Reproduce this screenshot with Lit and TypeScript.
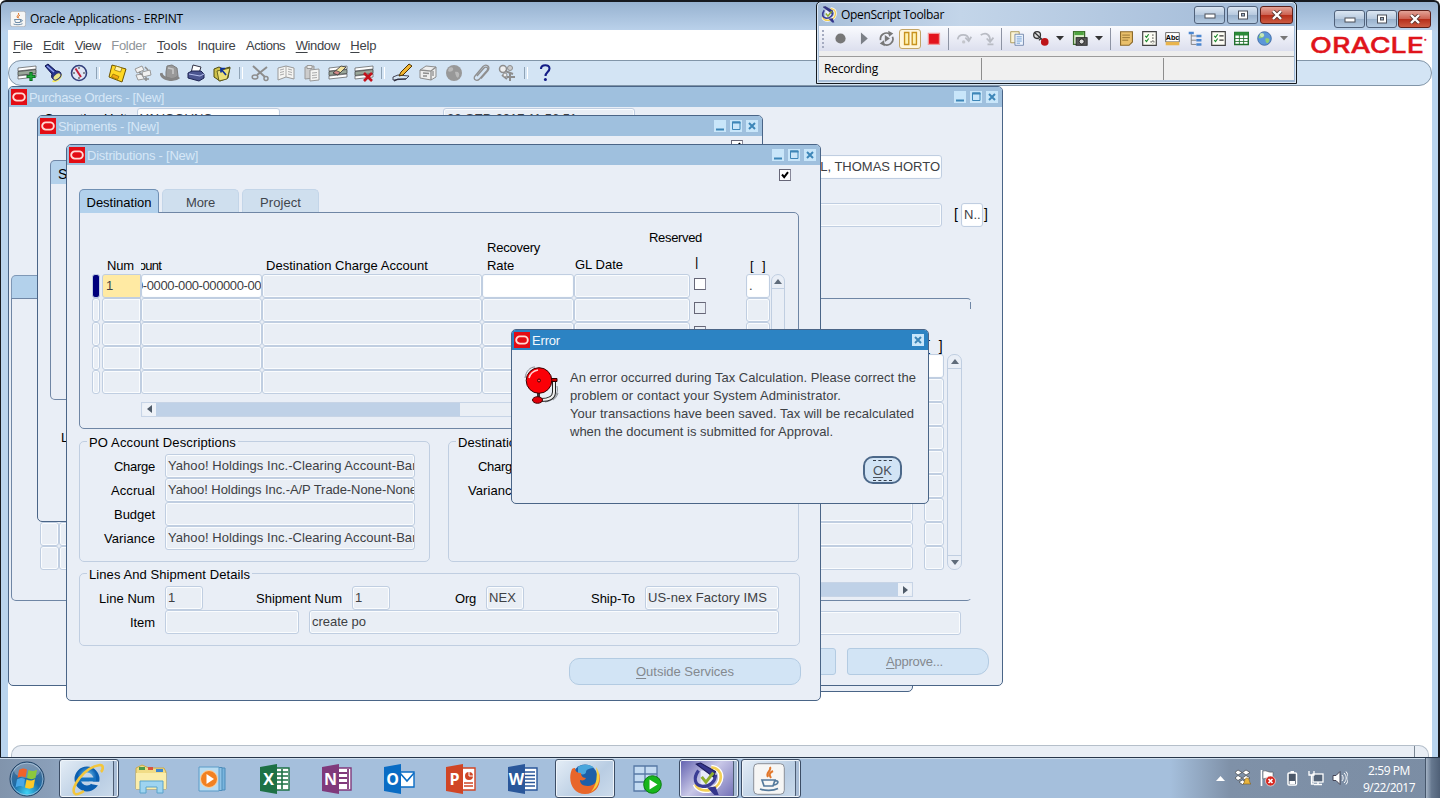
import { LitElement, html, svg, css, nothing } from "lit";
import { customElement, property } from "lit/decorators.js";

/** Text run spaced so that it fills a given width. */
@customElement("fit-text")
class FitText extends LitElement {
  @property({ type: Number }) w = 0;
  static styles = css`
    :host { display: inline-block; width: max-content; white-space: nowrap; flex: none; }
  `;
  render() { return html`<slot></slot>`; }
  firstUpdated() {
    if (!this.w) return;
    const len = (this.textContent || "").length;
    const natural = this.getBoundingClientRect().width;
    this.style.letterSpacing = `${(this.w - natural) / len}px`;
  }
}

/** Inner window of the Forms desktop. */
@customElement("mdi-window")
class MdiWindow extends LitElement {
  @property() heading = "";
  @property({ type: Number }) w = 0;
  @property({ type: Boolean }) modal = false;
  static styles = css`
    :host { display: flex; flex-direction: column; box-sizing: border-box; background: #e9eef6;
      border: 1px solid #4a6587; border-radius: 5px; overflow: hidden; }
    .bar { display: flex; align-items: center; height: 20px; flex: none; background: #9fc0de; color: #d6e7f7;
      padding: 0 4px 0 2px; }
    .bar.modal { background: #2c83c3; color: #f2f8fd; }
    .logo { margin-right: 2px; display: block; }
    fit-text { padding-top: 2px; }
    .gap { flex: 1; }
    .ctl { display: flex; gap: 4px; }
    svg { display: block; }
  `;
  render() {
    const box = svg`<rect width="12" height="12" fill="#c9e6fa"/>`;
    return html`
      <div class="bar ${this.modal ? "modal" : ""}">
        <svg class="logo" width="16" height="16" viewBox="0 0 16 16"><rect width="16" height="16" fill="#e30c14"/>
          <rect x="2.200" y="4.400" width="11.600" height="7.200" rx="3.600" fill="none" stroke="#ffd9d4" stroke-width="1.900"/></svg>
        <fit-text .w=${this.w}>${this.heading}</fit-text>
        <span class="gap"></span>
        <span class="ctl">
          ${this.modal ? nothing : html`
            <svg width="12" height="12">${box}<path d="M2 9.500h8" stroke="#3d86b8" stroke-width="2"/></svg>
            <svg width="12" height="12">${box}<path d="M2.500 2v7.500h7.500V2z" fill="none" stroke="#3d86b8"/><path d="M2 2.500h8.500" stroke="#3d86b8" stroke-width="2"/></svg>`}
          <svg width="12" height="12">${box}<path d="M3 3l6 6M9 3l-6 6" stroke="#3d86b8" stroke-width="2"/></svg>
        </span>
      </div>
      <slot></slot>`;
  }
}

const t = (s: string, w: number, cls = "") => html`<fit-text class=${cls} .w=${w}>${s}</fit-text>`;

// Label with an underlined mnemonic at index i
const m = (s: string, i: number, w: number, cls = "") =>
  html`<fit-text class=${cls} .w=${w}>${s.slice(0, i)}<u>${s[i]}</u>${s.slice(i + 1)}</fit-text>`;

const brackets = "[\u00a0\u00a0]";

const ico = (body: unknown, size = 20) =>
  html`<svg width=${size} height=${size} viewBox="0 0 20 20">${body}</svg>`;

const stripes = svg`<path d="M1 5l18-2v3L1 8z" fill="#fff" stroke="#555" stroke-width=".7"/><path d="M1 8.500l18-2v4L1 12.500z" fill="#9aa79a" stroke="#444" stroke-width=".8"/><path d="M1 13l18-2v3L1 16z" fill="#fff" stroke="#555" stroke-width=".7"/>`;
const sheets = svg`<path d="M2 5l8-2 8 2v11l-8-2-8 3z" fill="#f4f4f2" stroke="#999"/><path d="M10 3v11M4 7l4-1M4 9.500l4-1M4 12l4-1M12 6l4 1M12 8.500l4 1M12 11l4 1" stroke="#aaa" fill="none"/>`;

const mainTools: unknown[][] = [
  [
    svg`${stripes}<path d="M14 9v9M9.500 13.500h9" stroke="#0a6b1d" stroke-width="3.200"/><path d="M14 10v7M10.500 13.500h7" stroke="#1fae3c" stroke-width="1.400"/>`,
    svg`<path d="M9 19c5 1 10-3 10-8l-5 0z" fill="#f7ec5a"/><path d="M2 3l3-2 8 7c3 0 5 1 5 3 0 3-4 6-7 5-2 0-3-2-2-5z" fill="#27348f" stroke="#0d1450"/><path d="M4 3l7 6" stroke="#8fa2ee" stroke-width="1.500"/><ellipse cx="14" cy="13.500" rx="4.500" ry="2.600" transform="rotate(-38 14 13.500)" fill="#e8e48a" stroke="#333a70"/>`,
    svg`<circle cx="10" cy="10" r="7.500" fill="#dfe6f4" stroke="#33407c" stroke-width="1.600"/><path d="M6.500 5.500L12 14" stroke="#c3203a" stroke-width="2"/><path d="M10 4v2M10 14v2M4 10h2M14 10h2" stroke="#333"/>`,
  ],
  [
    svg`<path d="M5 2l14 4-4 13-13-5z" fill="#ffd824" stroke="#6e5500"/><path d="M9 3l6 2-1.500 4-6-2z" fill="#fff3b0" stroke="#8a6d00" stroke-width=".7"/><path d="M6 11l6 2.500-1.500 3-6-2.500z" fill="#f3a712" stroke="#8a6d00" stroke-width=".7"/>`,
    svg`<path d="M2 6l7-3 2 4-7 3zM9 9l8-2 1 5-8 2zM3 12l6-1 2 5-6 1z" fill="#f1f1f1" stroke="#999"/><path d="M12 4l3 3M6 9l3 3M13 14v4M11 16h5" stroke="#8d8d8d" stroke-width="1.500"/>`,
    svg`<path d="M6 9l1-6 5-1 5 3 1 8-5 3-7-2z" fill="#999" stroke="#7d7d7d"/><path d="M1 10c1 6 12 9 18 4" stroke="#858585" stroke-width="3" fill="none"/><path d="M8 5l5 1v5" stroke="#c9c9c9" stroke-width="1.500" fill="none"/>`,
    svg`<path d="M7 2l8 2-2 6H5z" fill="#fff" stroke="#334"/><path d="M2 10l4-2h9l3 3v4l-5 3-11-3z" fill="#4b5590" stroke="#1c2352"/><path d="M3 11l11 2 4-2" stroke="#b6c0ee" fill="none"/>`,
    svg`<path d="M2 6l5-2 4 2 7-2-2 11-8 3-6-4z" fill="#cfc24a" stroke="#4d4a10"/><path d="M5 8l13-3-3 11-8 2z" fill="#eadf78" stroke="#4d4a10" stroke-width=".8"/><path d="M14 12L9 6m0 3.500V5.500h4" stroke="#0b2f9c" stroke-width="1.700" fill="none"/>`,
  ],
  [
    svg`<path d="M3 3l12 11M17 4L7 12" stroke="#8d8d8d" stroke-width="2"/><circle cx="16" cy="15.500" r="2" fill="none" stroke="#8d8d8d" stroke-width="1.500"/><ellipse cx="5" cy="14" rx="2.800" ry="2" fill="none" stroke="#8d8d8d" stroke-width="1.500"/>`,
    sheets,
    svg`<path d="M3 4l9-1v12l-9 1z" fill="#ccc" stroke="#999"/><path d="M5 2.500h5v3H5z" fill="#eee" stroke="#999"/><path d="M8 7l9-1v11l-9 1z" fill="#f4f4f2" stroke="#999"/><path d="M10 10l5-.5M10 12.500l5-.5M10 15l5-.5" stroke="#aaa"/>`,
    svg`${stripes}<path d="M5 10L13 3l5 1-8 8z" fill="#f3e3a0" stroke="#444" stroke-width=".9"/><path d="M5 10l3-2.500 4 1.800L10 12z" fill="#d68a8a" stroke="#444" stroke-width=".8"/>`,
    svg`${stripes}<path d="M10 10l8 8M18 10l-8 8" stroke="#c4121c" stroke-width="2.600"/>`,
  ],
  [
    svg`<path d="M1 14l5-2 11 1-3 3-13 1z" fill="#d6e6f4" stroke="#334" stroke-width=".9"/><path d="M2 18l4-2h8" stroke="#223" fill="none" stroke-width="1.200"/><path d="M7 13l2-4 8-8 3 2-9 9z" fill="#f2b632" stroke="#503300"/>`,
    svg`<path d="M2 7l6-4 10 1v10l-5 3-11-2z" fill="#eee" stroke="#8d8d8d"/><path d="M2 7l11 1v9M13 8l5-4M5 10l6 .5M5 13h4M15 8v5" stroke="#8d8d8d" fill="none" stroke-width="1.300"/>`,
    svg`<circle cx="10" cy="10" r="8" fill="#989898"/><path d="M5 5c3-2 5 0 4 2s-4 2-5 1zM11 9c3-1 5 1 4 4s-3 2-4-4z" fill="#b9b9b9"/>`,
    svg`<path d="M6 13l7-8c2-2 5 0 3 2.500L8.500 16c-3 3-7 0-4.500-3l8-9.500c3-3 8 0 5 4l-7 8" fill="none" stroke="#8f8f8f" stroke-width="1.300"/>`,
    svg`<circle cx="6" cy="6" r="3.500" fill="#eee" stroke="#8d8d8d" stroke-width="1.500"/><circle cx="13" cy="5" r="2.500" fill="#ccc" stroke="#8d8d8d"/><path d="M8 8l8 3M5 12l5 4M13 10v8M10 14h8" stroke="#8d8d8d" stroke-width="2"/><circle cx="8" cy="12" r="2" fill="#eee" stroke="#8d8d8d"/>`,
  ],
  [svg`<path d="M6 6c0-5 8.500-5 8.500-.5 0 3.500-4 3.500-4 7.500" fill="none" stroke="#131c86" stroke-width="2.100"/><circle cx="10.400" cy="16.500" r="1.500" fill="#131c86"/>`],
];

const check = svg`<path d="M5 7l1.500 1.500L9 5M5 12l1.500 1.500L9 10" stroke="#1d8a2e" stroke-width="1.400" fill="none"/>`;
const drop = (c = "#333") => html`<svg class="drop" width="8" height="5"><path d="M0 0h8L4 4.500z" fill=${c} /></svg>`;
const opDoc = svg`<path d="M2 2h10v13H2z" fill="#fbf3d5" stroke="#a5904a"/><path d="M7 5h10v13H7z" fill="#eef5ff" stroke="#6a7fa5"/><path d="M9 8h6M9 10.500h6M9 13h6M9 15.500h4" stroke="#5b8fc9"/>`;

const officeIcon = (letter: string, c: string, page: unknown) => html`
  <svg width="32" height="32" viewBox="0 0 32 32">${page}
    <path d="M1 4l17-3v30L1 28z" fill=${c} />
    <text x="9.500" y="21.500" text-anchor="middle" class="office">${letter}</text>
  </svg>`;
const page = (c: string, lines: unknown) => svg`<path d="M17 5h13v22H17z" fill="#fff" stroke=${c} stroke-width="1.400"/>${lines}`;

const java = (s: number) => html`<svg width=${s} height=${s} viewBox="0 0 32 32">
  <rect x=".7" y=".7" width="30.600" height="30.600" rx="4" fill="#f6f6f5" stroke="#8a8f98" />
  <path d="M17 4c2 4-5 5-2 10M20 8c-4 2-4 4-2 7" fill="none" stroke="#e2772a" stroke-width="2"/>
  <path d="M9 17h13l-2 6h-9zM22 18c4-1 4 3-1 4" fill="none" stroke="#557a9c" stroke-width="1.700"/><path d="M7 26c5 2 13 2 18-.5" stroke="#557a9c" fill="none" stroke-width="1.700"/></svg>`;

const script = (s: number) => html`<svg width=${s} height=${s} viewBox="0 0 32 32">
  <path d="M20 5c12 1 12 16 0 21-7 2-13 0-15-5" fill="none" stroke="#fff" stroke-width="5"/>
  <path d="M20 5c12 1 12 16 0 21-7 2-13 0-15-5" fill="none" stroke="#f3cf55" stroke-width="2.600"/>
  <path d="M10 8h12v14H10z" fill="#e8ebfa"/>
  <path d="M8 8c-5 7-4 14 4 15 7 0 12-5 12-11" fill="none" stroke="#3a3c95" stroke-width="3"/>
  <path d="M6 2l4-1 14 8-2 5z" fill="#34358c" stroke="#1d1c5c"/>
  <path d="M11 14l4 5 7-9" fill="none" stroke="#8fae2d" stroke-width="2.800"/><path d="M16 24l7 7h4l-3-8z" fill="#34358c"/></svg>`;

const tasks: { cls?: string; icon: unknown }[] = [
  { cls: "on stack", icon: html`<svg width="34" height="34" viewBox="0 0 34 34">
      <defs><radialGradient id="ie" cx=".5" cy=".35"><stop offset="0" stop-color="#7fd3fa"/><stop offset="1" stop-color="#0b5eb0"/></radialGradient></defs>
      <circle cx="17" cy="17" r="9.500" fill="none" stroke="url(#ie)" stroke-width="6"/><path d="M8 17.500h18" stroke="#1672c0" stroke-width="4"/><path d="M19 19.800h11v4l-8-1.500z" fill="#cfdae9"/>
      <path d="M5 32C-1 27 14 5 30 3c4 0 3 5 1 7M5 32c3 1 6-1 9-3" fill="none" stroke="#f3c63c" stroke-width="2.600"/></svg>` },
  { icon: html`<svg width="34" height="32" viewBox="0 0 34 32"><path d="M2 5l6-3 7 3h15l2 4v17H2z" fill="#f1dc86" stroke="#c9a94d"/><path d="M5 4h6v3H5z" fill="#4b9a4a"/><path d="M14 4h5v3h-5z" fill="#d8523e"/><path d="M22 6h7v3h-7z" fill="#3f86cf"/><path d="M2 10h30v16H2z" fill="#fbedaa"/><path d="M6 18h23v12h-6v-6H12v6H6z" fill="#9ed4f0" stroke="#5aa3cb"/></svg>` },
  { icon: html`<svg width="30" height="28" viewBox="0 0 30 28"><path d="M9 3h18v22H9z" fill="#79b4dd" stroke="#4d8dbb"/><path d="M5 2.500h19v23H5z" fill="#8fc3e6" stroke="#4d8dbb"/><path d="M1 2h20v24H1z" fill="#b9dcf1" stroke="#5b9bc8"/><circle cx="11" cy="14" r="8.500" fill="#f28121" stroke="#fbd3a3"/><path d="M8.500 9l7.500 5-7.500 5z" fill="#fff"/></svg>` },
  { icon: officeIcon("X", "#1e7145", page("#1e7145", svg`<path d="M18 9h11M18 13h11M18 17h11M18 21h11M23 6v20" stroke="#1e7145" stroke-width="1.600"/>`)) },
  { icon: officeIcon("N", "#80397b", page("#80397b", svg`<path d="M18 10h8M18 15h8M18 20h8M27 6v20" stroke="#80397b" stroke-width="1.800"/>`)) },
  { icon: officeIcon("O", "#0a6cc4", svg`<path d="M17 9h14v15H17z" fill="#fff" stroke="#0a6cc4" stroke-width="1.400"/><path d="M17 10l7 8 7-8" fill="none" stroke="#0a6cc4" stroke-width="1.600"/>`) },
  { icon: officeIcon("P", "#d04525", page("#d04525", svg`<circle cx="24" cy="13" r="4" fill="#d04525"/><path d="M24 13V9M24 13h4" stroke="#fff"/><path d="M19 20h9M19 23h9" stroke="#d04525" stroke-width="1.500"/>`)) },
  { icon: officeIcon("W", "#2a579a", page("#2a579a", svg`<path d="M18 9h10M18 12.500h10M18 16h10M18 19.500h10M18 23h10" stroke="#2a579a" stroke-width="1.500"/>`)) },
  { cls: "on", icon: html`<svg width="32" height="32" viewBox="0 0 32 32"><circle cx="16" cy="14" r="12.500" fill="#1d5fa8"/><path d="M9 4c4-3 13-3 16 1-3 0-8 1-8 4 0 3-5 3-8 1z" fill="#49a6dc"/><path d="M3 6C-2 18 4 31 16 31c12 0 17-11 14-21 0 8-5 13-11 13-6 0-8-3-8-6 3 1 5 0 6-2-4 0-5-3-5-5-4 0-6-2-6-5-1 0-2 0-3 1z" fill="#e8662a"/><path d="M27 4c6 8 4 20-5 25 5-6 7-15 5-25z" fill="#f9cf3d"/></svg>` },
  { icon: html`<svg width="30" height="30" viewBox="0 0 30 30"><path d="M2 2h23v25H2z" fill="#c4dbf2" stroke="#5779a5" stroke-width="1.300"/><path d="M2 10h23M2 18h23M13 2v25" stroke="#5779a5" stroke-width="1.300"/><circle cx="20.500" cy="20.500" r="8.800" fill="#17b61c" stroke="#0a7c10"/><path d="M17.500 15.500l8 5-8 5z" fill="#fff"/></svg>` },
  { cls: "on stack violet", icon: script(34) },
  { cls: "on stack", icon: java(32) },
];

@customElement("app-root")
class AppRoot extends LitElement {
  static styles = css`
    :host { display: flex; flex-direction: column; position: relative; width: 1440px; height: 798px; overflow: hidden;
      background: #fff; font: 13px/16px "Liberation Sans", Arial, sans-serif; color: #000; }
    * { box-sizing: border-box; }
    svg { display: block; flex: none; }
    u { text-underline-offset: 2px; text-decoration-thickness: 1px; }
    .segoe { font-family: "Open Sans", "Noto Sans", sans-serif; font-size: 12px; }

    .frame { display: flex; flex-direction: column; height: 757px; border: solid #16191f; border-width: 2px 2px 0 1px; border-radius: 6px 6px 0 0;
      background: linear-gradient(#97b2d0, #bcd3ec 30px, #b9d4ee 31px); padding: 0 6px 0 7px; }
    .caption { display: flex; align-items: center; height: 28px; padding: 5px 0 0 2px; gap: 4px; flex: none; }
    .grow { flex: 1; }
    .wctl { display: flex; align-self: flex-start; gap: 1px; }
    .wb { display: grid; place-items: center; width: 31px; height: 18px; border: 1px solid #50617a; border-radius: 3px;
      background: linear-gradient(#dbe6f2, #b8cadf 48%, #98b0cb 50%, #b5cbe2); }
    .wb.x { width: 33px; background: linear-gradient(#e3a397, #cd6353 48%, #b52c18 50%, #cc5b42); border-color: #5d1f19; }
    .main .wctl { margin: 3px 1px 0 0; }
    .menu { display: flex; align-items: center; height: 30px; background: #fff; padding: 2px 0 0 5px; gap: 10.600px; color: #3e4247; flex: none; }
    .off { color: #8f9499; }
    .brand { margin-top: -3px; }
    .brand text { font: 500 22px "Inter", sans-serif; fill: #e0141b; stroke: #e0141b; stroke-width: .4px; }
    .brand .tm { font-size: 5px; }
    .desktop { flex: 1; background: #fff; display: flex; flex-direction: column; }
    .tools { display: flex; align-items: center; height: 26px; border: 1px solid #8195a8; border-radius: 14px; background: #d3e4f4; padding-left: 5px; flex: none; }
    .tools .i { width: 26.100px; display: grid; place-items: center; }
    .tools .s { width: 12px; height: 13px; display: grid; place-items: center; }
    .tools .s::before { content: ""; width: 2px; height: 12px; border-left: 1px solid #8fa3b6; border-right: 1px solid #fff; }
    .status { height: 12px; margin: auto 3px 0; border: 1px solid #b5bfca; border-bottom: 0; border-radius: 10px 10px 0 0; background: #e9eef5;
      display: flex; justify-content: flex-end; padding-right: 13px; }
    .status i { width: 1px; background: #7b8794; }

    mdi-window, .openscript { position: absolute; }
    .back { left: 400px; top: 300px; width: 513px; height: 392px; }
    .po { left: 8px; top: 86px; width: 995px; height: 600px; }
    .ship { left: 37px; top: 115px; width: 726px; height: 407px; }
    .dist { left: 66px; top: 144px; width: 755px; height: 557px; }
    .err { left: 511px; top: 329px; width: 418px; height: 175px; }

    .f { height: 24px; border: 1px solid #c0cee1; border-radius: 3px; box-shadow: inset 0 0 0 1px #fafcfe; background: #e9eef5;
      padding: 0 2px; line-height: 22px; color: #3d4044; white-space: nowrap; overflow: hidden; flex: none; }
    .f.w { background: #fff; }
    .f.y { background: #ffeaa3; box-shadow: none; }
    .r { display: flex; flex: none; }
    .cb { width: 12px; height: 12px; border: 1px solid #667; border-right-color: #889; background: #fff; flex: none; display: grid; place-items: center; }
    .cb.d { background: #e9eef5; }
    .btn { display: grid; place-items: center; height: 27px; background: #d2e4f5; border: 1px solid #b3cbe2; color: #84898f; border-radius: 10px; flex: none; }

    .vs { width: 14px; border: 1px solid #c0cee1; border-radius: 7px; display: flex; flex-direction: column; justify-content: space-between; }
    .vs span { height: 14px; display: grid; place-items: center; border-bottom: 1px solid #c0cee1; }
    .vs span + span { border: 0; border-top: 1px solid #c0cee1; }
    .hs { display: flex; height: 15px; border: 1px solid #c7d4e6; background: #e9eef5; }
    .hs span { width: 14px; display: grid; place-items: center; background: #eef2f8; border-radius: 5px 0 0 5px; }
    .hs span.rt { border-radius: 0 5px 5px 0; }
    .hs i { background: #bfd1e7; }

    /* Purchase Orders */
    .po1 { margin: 1px 0 0 35px; }
    .po1 .lab { width: 93px; padding-top: 3px; }
    .po1 .f { line-height: 20px; }
    .po1 .unit { width: 143px; } .po1 .date { width: 192px; margin-left: 163px; padding-left: 3px; }
    .end { justify-content: flex-end; }
    .po2 { margin-top: 23px; padding-right: 60px; }
    .po2 .f, .po3 .wide { width: 360px; text-align: right; padding-right: 1px; }
    .po3 { margin-top: 24px; padding-right: 14px; font-size: 14px; }
    .po3 .lb { width: 6px; margin-left: 12px; padding-top: 3px; }
    .po3 .nn { width: 22px; margin-left: 1px; font-size: 13px; }
    .po3 .rb { width: 4px; margin-left: 1px; padding-top: 3px; }
    .potab { width: 80px; height: 24px; margin: 48px 0 0 2px; border: 1px solid #7f98b6; border-bottom: 0; border-radius: 5px 0 0; background: #b3d1eb; flex: none; }
    .poframe { margin: -1px 0 0 2px; width: 961px; height: 303px; border: 1px solid #6f86a5; border-right-color: transparent; border-radius: 0 5px 5px 5px; padding-left: 28px; flex: none;
      background: linear-gradient(#6f86a5, #6f86a5) no-repeat right 3px / 1px 7px; }
    .poh { height: 55px; display: flex; align-items: flex-end; justify-content: flex-end; padding-right: 28px; font-size: 14px; }
    .pog { display: flex; }
    .pog .rows { width: 904px; }
    .pog .a { width: 19px; } .pog .b { width: 854px; } .pog .c { width: 20px; margin-left: 11px; }
    .pog .vs { margin-left: 3px; width: 15px; }
    .pohs { width: 313px; margin: 12px 0 0 560px; }
    .po5 { margin-top: 10px; padding-right: 41px; } .po5 .f { width: 400px; }
    .po6 { margin-top: 13px; padding-right: 13px; gap: 11px; }
    .po6 .btn { width: 142px; border-radius: 3px 12px 12px 3px; padding-right: 7px; } .po6 .btn:first-child { border-radius: 3px; width: 120px; }

    /* Shipments */
    .shcb { margin: 4px 19px 0 auto; }
    .shtab { width: 100px; height: 24px; margin: 8px 0 0 12px; padding: 5px 0 0 7px; font-size: 14px; border: 1px solid #6f86a5; border-bottom: 0; border-radius: 5px 0 0; background: #b3d1eb; flex: none; }
    .shframe { width: 500px; height: 216px; margin-left: 12px; border: 1px solid #6f86a5; border-top: 0; border-radius: 0 0 5px 5px; flex: none; }
    .shl { margin: 30px 0 0 23px; }

    /* Distributions */
    .dcb { margin: 4px 29px 0 auto; }
    .tabs { display: flex; gap: 3px; margin: 8px 0 0 12px; height: 24px; flex: none; }
    .tab { width: 77px; height: 23px; border-radius: 5px 5px 0 0; border: 1px solid #c3d5e8; border-bottom: 0; background: #cfdfee; color: #3f454c; display: grid; place-items: center; padding-top: 3px; }
    .tab.act { width: 80px; height: 24px; border-color: #6f8fb3; background: #b2d1ec; color: #000; position: relative; }
    .dframe { margin: -1px 0 0 12px; width: 720px; height: 217px; border: 1px solid #6f86a5; border-radius: 0 5px 5px 5px; flex: none; padding-left: 12px; }
    .res { height: 33px; padding: 17px 0 0 557px; }
    .grid { display: grid; grid-template-columns: 10px 39px 121px 220px 92px 116px 56px 24px; width: 678px; }
    .head { height: 28px; grid-template-rows: 29px; align-items: end; line-height: 18px; }
    .head > * { display: flex; flex-direction: column; align-items: flex-start; padding-left: 5px; }
    .head .h0 { padding: 0; } .head .hc { padding-left: 0; overflow: hidden; }
    .head .dca { padding-left: 4px; }
    .head .clip { margin-left: -8px; }
    .head .gl { padding: 0 0 1px 1px; } .head .bar { padding: 0 0 4px 5px; } .head .dff { padding-left: 4px; }
    .grid .f.n { padding-left: 3px; border-radius: 3px 0 0 3px; }
    .grid .ind { width: 8px; padding: 0; border-radius: 3px; }
    .grid .ind.sel { background: #00007c; box-shadow: none; }
    .grid .cb { margin: 4px 0 0 4px; }
    .acct fit-text { margin-left: -8px; }
    .dbody { display: flex; }
    .dbody .vs { margin-left: 1px; height: 120px; }
    .dhs { width: 549px; margin: 7.500px 0 0 49px; } .dhs i { width: 304px; }
    .sets { display: flex; gap: 18px; margin: 12px 0 0 12px; flex: none; }
    .set { border: 1px solid #c0cee1; border-radius: 5px; height: 121px; width: 351px; padding-top: 12px; }
    .set > .leg { position: relative; display: table; height: 14px; line-height: 14px; margin: -18px 0 4px 7px; padding: 0 2px; background: #e9eef6; }
    .lbl { width: 75px; text-align: right; padding-top: 5px; flex: none; }
    .set .f { margin-left: 10px; } .acc .f { width: 250px; }
    .acc2 .lbl { width: 70px; } .acc2 .f { width: 240px; }
    .lines { width: 721px; height: 73px; margin: 11px 0 0 12px; flex: none; }
    .f38 { width: 38px; }
    .l2 { width: 139px; } .l3 { width: 86px; } .l4 { width: 111px; }
    .lines .f133 { width: 134px; } .lines .item { width: 134px; } .lines .desc { width: 470px; }
    .out { width: 232px; margin: 12px 0 0 502px; }

    /* Error dialog */
    .ebody { display: flex; padding: 16px 0 0 12px; color: #3d4145; height: 106px; }
    .ebody .msg { display: flex; flex-direction: column; line-height: 18px; margin: 3px 0 0 10px; }
    .ok { width: 39px; height: 28px; margin: 0 26px 0 auto; border: 2px solid #4c6889; color: #4a5058; }
    .ok span { border: dashed #333b46; border-width: 1px 0; height: 21px; padding-top: 2px; }

    /* OpenScript toolbar */
    .openscript { left: 816px; top: 1px; width: 481px; height: 83px; border: 1px solid #151a20; border-radius: 5px 5px 0 0;
      background: linear-gradient(90deg, #a8bfd9, #c3d5e9 30%, #9fb8d6); box-shadow: inset 0 0 0 1px #dbe8f5; padding: 1px 2px 3px; display: flex; flex-direction: column; }
    .ocap { display: flex; height: 23px; align-items: center; padding-left: 1px; gap: 4px; }
    .openscript .wctl { margin: 3px 1px 0 0; gap: 2px; }
    .obar { display: flex; height: 25px; align-items: center; background: linear-gradient(#fafbfe, #dcdfee); padding-left: 3px; }
    .obar > * { flex: none; }
    .obar .i { width: 23px; height: 20px; display: grid; place-items: center; }
    .obar .hot { border: 1px solid #c3a566; border-radius: 3px; background: #fff6dc; margin: 0 1px; width: 22px; }
    .obar .s { width: 1px; height: 22px; background: #8d93a3; margin: 0 4px 0 2.500px; }
    .obar .grip { width: 2px; height: 18px; border-left: 2px dotted #a5abc0; margin-right: 5px; }
    .obar .drop { margin: 0 4px; }
    .ostat { display: flex; flex: 1; margin-top: 5px; background: #f0f0f0; border-top: 1px solid #9b9b9b; align-items: center; padding-left: 5px; }
    .ostat i { width: 1px; height: 22px; background: #8d8d8d; }
    .c1 { width: 157px; } .c2 { width: 181px; }
    .owrap { background: #eeeeee; flex: 1; display: flex; flex-direction: column; }

    /* Task bar */
    .taskbar { display: flex; height: 41px; align-items: center; border-top: 1px solid #27364a; box-shadow: inset 0 1px #cfdeed;
      background: linear-gradient(90deg, #8194ac 0, #8a9fb9 50px, #a5bfdc 120px, #a5bfdc 1170px, #7f91a8 1230px, #7b8da4 1440px); }
    .orb { margin: 1px 14px 0 9px; }
    .apps { display: flex; gap: 2px; height: 39px; margin-top: 1px; }
    .task { width: 60px; display: grid; place-items: center; }
    .task.on { border: 1px solid #3c4d65; border-radius: 3px; background: linear-gradient(135deg, #e4edf6, #b9cde3 60%, #cddcec); box-shadow: inset 0 0 0 1px #eef4fa; }
    .task.stack { box-shadow: inset 0 0 0 1px #eef4fa, inset -4px 0 #a9bdd6, inset -5px 0 #4d5d74; padding-right: 4px; }
    .task.on.violet { background: linear-gradient(135deg, #5f5fae, #c9c8e8 45%, #6a68b2); }
    .office { font: 700 16px "Open Sans", sans-serif; fill: #fff; }
    .tray { display: flex; align-items: center; gap: 8px; margin-left: auto; }
    .tray .up { margin-right: 1px; }
    .clock { display: flex; flex-direction: column; align-items: center; color: #fff; line-height: 17px; width: 54px; margin: 1px 1px 0 6px; }
    .peek { width: 15px; height: 40px; border-left: 1px solid #46566b; background: linear-gradient(90deg, #a5b4c6, #66788f 40%, #4f6077); }
  `;

  private winControls() {
    return html`<div class="wctl">
      <span class="wb"><svg width="12" height="8"><rect x="1" y="3" width="10" height="4" fill="#fff" stroke="#4b4f58"/></svg></span>
      <span class="wb"><svg width="12" height="10"><rect x="1.500" y="1" width="9" height="8" fill="#fff" stroke="#4b4f58"/><rect x="4.500" y="3.500" width="3" height="2.500" fill="#9fb3cb" stroke="#4b4f58"/></svg></span>
      <span class="wb x"><svg width="12" height="10"><path d="M2 1l8 8M10 1L2 9" stroke="#59352f" stroke-width="4"/><path d="M2 1l8 8M10 1L2 9" stroke="#fff" stroke-width="2.400"/></svg></span>
    </div>`;
  }

  private scroll() {
    return html`<div class="vs"><span><svg width="8" height="5"><path d="M0 5h8L4 0z" fill="#5f6b7a"/></svg></span><span><svg width="8" height="5"><path d="M0 0h8L4 5z" fill="#5f6b7a"/></svg></span></div>`;
  }

  private tick() {
    return html`<svg width="10" height="10"><path d="M2 4.500l2.200 2.700L8 2.200" fill="none" stroke="#000" stroke-width="2"/></svg>`;
  }

  private frame() {
    return html`<div class="frame main">
      <div class="caption">${java(16)}${t("Oracle Applications - ERPINT", 153, "segoe")}<span class="grow"></span>${this.winControls()}</div>
      <div class="menu">
        ${m("File", 0, 19.5)}${m("Edit", 0, 21)}${m("View", 0, 26)}${m("Folder", 2, 35, "off")}${m("Tools", 0, 30)}${t("Inquire", 38)}${t("Actions", 39)}${m("Window", 0, 44)}${m("Help", 0, 26)}
        <span class="grow"></span>
        <svg class="brand" width="124" height="30"><text x="2" y="23" textLength="114" lengthAdjust="spacingAndGlyphs">ORACLE</text><text class="tm" x="116" y="11">•</text></svg>
      </div>
      <div class="desktop">
        <div class="tools">${mainTools.map((g, n) => html`${n ? html`<span class="s"></span>` : nothing}${g.map((i) => html`<span class="i">${ico(i)}</span>`)}`)}</div>
        <div class="status"><i></i></div>
      </div>
    </div>`;
  }

  private po() {
    return html`<mdi-window class="po" heading="Purchase Orders - [New]" .w=${135}>
      <div class="r po1"><span class="lab">${t("Operating Unit", 83)}</span><div class="f w unit">${t("YAHOO! INC", 72)}</div><div class="f date">${t("22-SEP-2017 11:56:51", 130)}</div></div>
      <div class="r end po2"><div class="f w">${t("HALL, THOMAS HORTO", 145)}</div></div>
      <div class="r end po3"><div class="f wide"></div><span class="lb">[</span><div class="f w nn">N..</div><span class="rb">]</span></div>
      <div class="potab"></div>
      <div class="poframe">
        <div class="poh">${t(brackets, 17)}</div>
        <div class="pog"><div class="rows">${Array.from({ length: 9 }, (_, i) => html`<div class="r"><div class="f a"></div><div class="f b"></div><div class="f c ${i ? "" : "w"}"></div></div>`)}</div>${this.scroll()}</div>
        <div class="hs pohs"><i class="grow"></i><span class="rt"><svg width="5" height="8"><path d="M0 0v8l5-4z" fill="#4f5b69"/></svg></span></div>
      </div>
      <div class="r end po5"><div class="f"></div></div>
      <div class="r end po6"><div class="btn"></div><div class="btn">${m("Approve...", 0, 57)}</div></div>
    </mdi-window>`;
  }

  private shipments() {
    return html`<mdi-window class="ship" heading="Shipments - [New]" .w=${101}>
      <div class="cb shcb">${this.tick()}</div>
      <div class="shtab">S</div><div class="shframe"></div><div class="shl">L</div>
    </mdi-window>`;
  }

  private distributions() {
    return html`<mdi-window class="dist" heading="Distributions - [New]" .w=${111}>
      <div class="cb dcb">${this.tick()}</div>
      <div class="tabs"><div class="tab act">${t("Destination", 65)}</div><div class="tab">${t("More", 29)}</div><div class="tab">${t("Project", 41)}</div></div>
      <div class="dframe">
        <div class="res">${t("Reserved", 53)}</div>
        <div class="grid head">
          <div class="h0"></div><div>${t("Num", 27)}</div><div class="hc">${t("count", 28, "clip")}</div><div class="dca">${t("Destination Charge Account", 162)}</div>
          <div>${t("Recovery", 53)}${t("Rate", 27)}</div><div class="gl">${t("GL Date", 48)}</div><div class="bar">|</div><div class="dff">${t(brackets, 16)}</div>
        </div>
        <div class="dbody"><div>
          ${Array.from({ length: 5 }, (_, i) => html`<div class="grid">
            <div class="f ind ${i ? "" : "sel"}"></div><div class="f n ${i ? "" : "y"}">${i ? "" : "1"}</div>
            <div class="f acct ${i ? "" : "w"}">${i ? nothing : t("0-0000-000-000000-000", 132)}</div><div class="f"></div>
            <div class="f ${i ? "" : "w"}"></div><div class="f"></div><div class="cb ${i ? "d" : ""}"></div><div class="f ${i ? "" : "w"}">${i ? "" : "."}</div></div>`)}
        </div>${this.scroll()}</div>
        <div class="hs dhs"><span><svg width="5" height="8"><path d="M5 0v8L0 4z" fill="#4f5b69"/></svg></span><i></i></div>
      </div>
      <div class="sets">
        <div class="set acc"><div class="leg">${t("PO Account Descriptions", 147)}</div>
          ${[["Charge", 41, "Yahoo! Holdings Inc.-Clearing Account-Bank", 258], ["Accrual", 44, "Yahoo! Holdings Inc.-A/P Trade-None-None", 249], ["Budget", 41, "", 0], ["Variance", 51, "Yahoo! Holdings Inc.-Clearing Account-Bank", 258]].map(
            ([l, lw, v, vw]) => html`<div class="r"><div class="lbl">${t(l as string, lw as number)}</div><div class="f">${v ? t(v as string, vw as number) : nothing}</div></div>`)}
        </div>
        <div class="set acc2"><div class="leg">${t("Destination Account Descriptions", 191)}</div>
          <div class="r"><div class="lbl">${t("Charge", 41)}</div><div class="f"></div></div>
          <div class="r"><div class="lbl">${t("Variance", 51)}</div><div class="f"></div></div>
        </div>
      </div>
      <div class="set lines"><div class="leg">${t("Lines And Shipment Details", 161)}</div>
        <div class="r"><div class="lbl">${t("Line Num", 56)}</div><div class="f f38">1</div><div class="lbl l2">${t("Shipment Num", 86)}</div><div class="f f38">1</div>
          <div class="lbl l3">${t("Org", 21)}</div><div class="f f38">${t("NEX", 27)}</div><div class="lbl l4">${t("Ship-To", 44)}</div><div class="f f133">${t("US-nex Factory IMS", 119)}</div></div>
        <div class="r"><div class="lbl">${t("Item", 25)}</div><div class="f item"></div><div class="f desc">${t("create po", 54)}</div></div>
      </div>
      <div class="btn out">${m("Outside Services", 0, 98)}</div>
    </mdi-window>`;
  }

  private error() {
    return html`<mdi-window class="err" modal heading="Error" .w=${28}>
      <div class="ebody">
        <svg width="36" height="40" viewBox="0 0 36 40">
          <path d="M1 12C2 5 6 1 11 1M33 20c2 8-3 15-12 16M29 34c2-1 4-4 5-7" fill="none" stroke="#8a8f96"/>
          <path d="M30 16v10c0 5-4 8-13 8" fill="none" stroke="#222" stroke-width="4"/><path d="M30 16v10c0 5-4 8-13 8" fill="none" stroke="#eee" stroke-width="2"/>
          <path d="M13 26h3v7h-3z" fill="#333"/><path d="M25 12.500h8v3h-8z" fill="#c00" stroke="#300"/>
          <circle cx="15" cy="14.500" r="12.800" fill="#fb0007" stroke="#3a0000"/><path d="M5 12c1-4 4-7 9-8" stroke="#ffd0d0" fill="none" stroke-width="1.500"/><circle cx="15" cy="14.500" r="1.500" fill="#f55" stroke="#400"/>
          <ellipse cx="13.500" cy="34" rx="5" ry="3.300" fill="#e0000a" stroke="#400"/></svg>
        <div class="msg">${t("An error occurred during Tax Calculation. Please correct the", 346)}${t("problem or contact your System Administrator.", 271)}${t("Your transactions have been saved. Tax will be recalculated", 344)}${t("when the document is submitted for Approval.", 263)}</div>
      </div>
      <div class="btn ok"><span>${m("OK", 0, 19)}</span></div>
    </mdi-window>`;
  }

  private openScript() {
    const b = (x: unknown) => html`<span class="i">${ico(x, 17)}</span>`;
    const s = html`<span class="s"></span>`;
    const form = svg`<path d="M2 2h16v16H2z" fill="#fdfdf4" stroke="#444" stroke-width="1.400"/>`;
    return html`<div class="openscript">
      <div class="ocap">${script(17)}${t("OpenScript Toolbar", 103, "segoe")}<span class="grow"></span>${this.winControls()}</div>
      <div class="obar"><span class="grip"></span>
        ${b(svg`<circle cx="10" cy="10" r="6" fill="#777"/>`)}
        ${b(svg`<path d="M7 3l8 7-8 7z" fill="#7b7f86"/>`)}
        ${b(svg`<path d="M3 12a7 7 0 0 1 11-7M17 8a7 7 0 0 1-11 8" fill="none" stroke="#777" stroke-width="2"/><path d="M12 1l6 3-5 4zM8 19l-6-3 5-4z" fill="#777"/><path d="M8 6l6 4-6 4z" fill="#777"/>`)}
        <span class="i hot">${ico(svg`<path d="M3 3h5v14H3zM12 3h5v14h-5z" fill="#fff2b0" stroke="#c8921d" stroke-width="1.600"/>`, 17)}</span>
        ${b(svg`<path d="M4 4h13v13H4z" fill="#e3131c" stroke="#f09a9a" stroke-width="1.500"/>`)}${s}
        ${b(svg`<path d="M2 11c1-7 12-7 13 0M18 8l-3 5-4-4" fill="none" stroke="#b9bcc4" stroke-width="2"/><circle cx="9" cy="14" r="2" fill="#c4c6cc"/>`)}
        ${b(svg`<path d="M2 6c7-4 11 0 11 6M17 9l-4 5-4-4M10 17h7" fill="none" stroke="#b9bcc4" stroke-width="2"/>`)}${s}
        ${b(opDoc)}
        ${b(svg`<circle cx="6" cy="6" r="4" fill="#ddd" stroke="#333" stroke-width="1.500"/><path d="M3 3l13 12M8 12l3-2" stroke="#333" stroke-width="1.500"/><circle cx="15" cy="14" r="4.500" fill="#bd1417"/>`)}${drop()}
        ${b(svg`<path d="M3 2h13v15H3z" fill="#dff0cf" stroke="#3c6b2c" stroke-width="1.500"/><path d="M4 2h11v4H4z" fill="#4ea33f"/><rect x="6" y="9" width="13" height="9" fill="#555" stroke="#222"/><circle cx="12.500" cy="13.500" r="3" fill="#ddd" stroke="#111"/>`)}${drop()}${s}
        ${b(svg`<path d="M3 2h14v12l-4 4H3z" fill="#eac06b" stroke="#8c6a2a" stroke-width="1.300"/><path d="M5 6h9M5 9h9M5 12h7" stroke="#8c6a2a"/>`)}
        ${b(svg`${form}${check}<path d="M14 5v11M11 14h5" stroke="#333" stroke-dasharray="2 1.500"/>`)}
        ${b(svg`<path d="M2 3h16v11H2z" fill="#fff" stroke="#555"/><text x="10" y="12" text-anchor="middle" font-size="8.500" font-weight="700">Abc</text><path d="M2 14h16v4H2z" fill="#e9b44c"/>`)}
        ${b(svg`<path d="M5 3v14M5 7h6M5 12h6M5 17h6" stroke="#777" fill="none"/><path d="M2 2h6v3H2zM11 5.500h6v3h-6zM11 10.500h6v3h-6zM11 15.500h6v3h-6z" fill="#4b86cf"/>`)}
        ${b(svg`${form}${check}<path d="M11 7h5M11 12h5" stroke="#333" stroke-width="1.500"/>`)}
        ${b(svg`<path d="M2 3h16v14H2z" fill="#fff" stroke="#1f6f2b" stroke-width="1.600"/><path d="M2 4.500h16" stroke="#2a8b38" stroke-width="4"/><path d="M2 10h16M2 13.500h16M7.500 6v11M12.500 6v11" stroke="#1f6f2b"/>`)}
        ${b(svg`<circle cx="10" cy="10" r="8" fill="#5b97d8" stroke="#3a66a0"/><path d="M5 4c4-1 6 2 4 4s-5 2-6 1zM11 10c4-1 6 1 4 4s-4 1-4-4z" fill="#8fcf72"/><circle cx="7" cy="6" r="2.500" fill="#fff" opacity=".5"/>`)}${drop("#777")}
      </div>
      <div class="owrap"><div class="ostat segoe"><span class="c1">${t("Recording", 54)}</span><i></i><span class="c2"></span><i></i></div></div>
    </div>`;
  }

  private taskbar() {
    return html`<div class="taskbar">
      <svg class="orb" width="36" height="36" viewBox="0 0 36 36">
        <defs><radialGradient id="orb" cx=".5" cy=".9" r=".8"><stop offset="0" stop-color="#3fd3f5"/><stop offset=".5" stop-color="#1b6ba6"/><stop offset="1" stop-color="#4c6f94"/></radialGradient></defs>
        <circle cx="18" cy="18" r="17" fill="url(#orb)" stroke="#1c3f63"/><circle cx="18" cy="18" r="16" fill="none" stroke="#a9cbe6" opacity=".7"/><ellipse cx="18" cy="9.500" rx="13" ry="7.500" fill="#fff" opacity=".25"/>
        <path d="M10 9c3-2 5-2 8-.5L16.500 16.500c-3-1.500-5-1-8 .5z" fill="#f0622a"/><path d="M19.500 9c3 1.500 5 1.500 8.500-.2L26.500 17c-3 1.500-5 1.500-8.500 0z" fill="#8cc83c"/>
        <path d="M8 18.500c3-1.500 5-2 8-.5L14.500 26c-3-1.500-5-1-8 .5z" fill="#48a7e8"/><path d="M17.500 18.500c3 1.500 5 1.500 8.500-.2L24.500 26.500c-3 1.500-5 1.500-8.500 0z" fill="#fbc929"/></svg>
      <div class="apps">${tasks.map((a) => html`<div class="task ${a.cls || ""}">${a.icon}</div>`)}</div>
      <div class="tray">
        <svg class="up" width="9" height="5"><path d="M0 5h9L4.500 0z" fill="#fff"/></svg>
        <svg width="18" height="18" viewBox="0 0 18 18"><path d="M4 1l4 2.500L4 6 1 3.500zM12 1l4 2.500L12 6 8.500 3.500zM4 6.500L8 9l-4 2.500L1 9zM12 6.500L16 9l-4 2.500L8.500 9zM5 13l3.500-2 3 2-3 2.500z" fill="#fff" stroke="#333" stroke-width=".6"/><path d="M9 15c2-1 1-6 4-6s2 5 4 6z" fill="#e9b43e" stroke="#85601a" stroke-width=".6"/></svg>
        <svg width="16" height="18" viewBox="0 0 16 18"><path d="M1.500 1v16" stroke="#fff" stroke-width="1.600"/><path d="M3 2c4-1 5 2 10 1v7c-4 1-6-2-10 0z" fill="#fff" stroke="#444" stroke-width=".5"/><circle cx="10.500" cy="12" r="5" fill="#d6271f" stroke="#fff" stroke-width=".6"/><path d="M8.500 10l4 4M12.500 10l-4 4" stroke="#fff" stroke-width="1.600"/></svg>
        <svg width="16" height="16" viewBox="0 0 16 16"><rect x="4" y="3" width="8.500" height="12" rx="1" fill="#4b5768" stroke="#fff" stroke-width="1.500"/><path d="M6.500 1h3.500v2H6.500z" fill="#fff"/><path d="M5.500 11h5.500v3H5.500z" fill="#fff"/></svg>
        <svg width="16" height="16" viewBox="0 0 16 16"><rect x="5" y="4" width="10" height="8" fill="#55657a" stroke="#fff" stroke-width="1.300"/><path d="M6 14.500h8M10 12v2" stroke="#fff" stroke-width="1.500"/><path d="M1 1v4h5V1M3.500 5v9H6" stroke="#fff" stroke-width="1.300" fill="none"/></svg>
        <svg width="16" height="16" viewBox="0 0 16 16"><path d="M1 5.500h3l4-4v13l-4-4H1z" fill="#fff" stroke="#445"/><path d="M10 5c1.500 2 1.500 4 0 6M12 3c3 3 3 7 0 10M14 1.500c3 4 3 9 0 13" fill="none" stroke="#fff"/></svg>
        <div class="clock segoe">${t("2:59 PM", 42)}${t("9/22/2017", 52)}</div>
        <span class="peek"></span>
      </div>
    </div>`;
  }

  render() {
    return html`${this.frame()}
      <mdi-window class="back" heading=""></mdi-window>
      ${this.po()}${this.shipments()}${this.distributions()}${this.error()}${this.openScript()}${this.taskbar()}`;
  }
}
